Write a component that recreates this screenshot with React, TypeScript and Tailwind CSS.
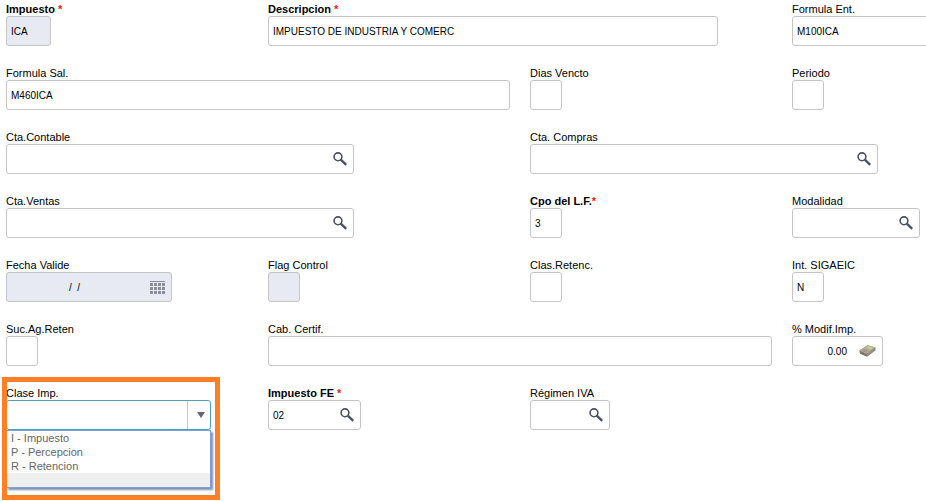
import React, { useState } from 'react';
import clsx from 'clsx';

const SearchIcon = () => (
  <svg width="14" height="14" viewBox="0 0 14 14" fill="none" stroke="#4b5162">
    <circle cx="5" cy="4.8" r="3.9" strokeWidth="1.6" />
    <path d="M7.8 7.6 L13.2 12.9" strokeWidth="2.3" />
  </svg>
);

const CalendarIcon = () => (
  <svg width="15" height="13" viewBox="0 0 15 13" fill="#8a8e98" shapeRendering="crispEdges">
    <rect x="0" y="0" width="15" height="1" />
    {[2, 6, 10].map((y) =>
      [0, 4, 8, 12].map((x) => <rect key={`${x}-${y}`} x={x} y={y} width="3" height="3" />)
    )}
  </svg>
);

const CalculatorIcon = () => (
  <svg width="17" height="14" viewBox="0 0 18 14">
    <path d="M0.5 6.6 L9.2 0.8 L17.4 3.4 L17.2 6.6 L8.4 13.2 L1 9.8 Z" fill="#7d746b" />
    <path d="M0.5 6.4 L9.2 0.8 L17.4 3.4 L8.2 10.2 Z" fill="#b5aca1" />
    <path d="M8.2 10.2 L17.4 3.4 L17.2 6.2 L8.4 12.8 Z" fill="#968d84" />
    <path d="M7.6 3.6 L10.6 1.6 L15.4 3.2 L12.2 5.5 Z" fill="#b6d67c" />
    <path d="M3.2 6.5 L8.4 8.4 M4.8 5.4 L10 7.2" stroke="#81776d" strokeWidth="0.8" strokeDasharray="1.6 0.8" />
  </svg>
);

type FieldProps = {
  id: string;
  label: string;
  required?: boolean;
  tight?: boolean;
  value?: string;
  width: string;
  span?: string;
  align?: string;
  disabled?: boolean;
  icon?: React.ReactNode;
  action?: string;
};

const Label = ({ id, label, required, tight }: Pick<FieldProps, 'id' | 'label' | 'required' | 'tight'>) => (
  <label htmlFor={id} className={clsx('block h-[14px] leading-[14px] whitespace-nowrap', required && 'font-bold')}>
    {label}
    {required && <span className="text-[#f02020]">{tight ? '*' : ' *'}</span>}
  </label>
);

const Field = ({ id, label, required, tight, value = '', width, span, align, disabled, icon, action }: FieldProps) => {
  const [text, setText] = useState(value);

  return (
    <div className={span}>
      <Label id={id} label={label} required={required} tight={tight} />
      <div
        className={clsx(
          'flex h-[30px] items-center rounded-[3px] border border-[#c4c5c7]',
          disabled ? 'bg-[#e7eaf2]' : 'bg-white',
          width
        )}
      >
        <input
          id={id}
          type="text"
          value={text}
          disabled={disabled}
          onChange={(e) => setText(e.target.value)}
          className={clsx('h-full w-full min-w-0 flex-1 bg-transparent px-1 text-[10px] outline-none', align)}
        />
        {icon && (
          <button type="button" aria-label={action} className="mr-[6px] ml-2 shrink-0">
            {icon}
          </button>
        )}
      </div>
    </div>
  );
};

const options = ['I - Impuesto', 'P - Percepcion', 'R - Retencion', ''];

const ClaseImp = () => {
  const [selected, setSelected] = useState('');

  return (
    <div className="relative">
      <Label id="clase" label="Clase Imp." />
      <div className="relative w-[205px]">
        <select
          id="clase"
          value={selected}
          onChange={(e) => setSelected(e.target.value)}
          className="block h-[30px] w-full appearance-none rounded-[3px] border border-[#4f9fb8] bg-white px-1 outline-none"
        >
          {options.map((option) => (
            <option key={option} value={option}>{option}</option>
          ))}
        </select>
        <span className="pointer-events-none absolute inset-y-px right-px flex w-[23px] items-center justify-center border-l border-[#c4c5c7] pl-1">
          <svg width="8" height="6" viewBox="0 0 8 6" fill="#626776">
            <path d="M0 0 H8 L4 6 Z" />
          </svg>
        </span>
        <ul
          role="listbox"
          aria-label="Clase Imp."
          className="absolute top-full right-0 left-0 border border-[#7b9fdb] bg-white text-[#666] shadow-[2px_2px_2px_#7d8fb0]"
        >
          {options.map((option) => (
            <li
              key={option}
              role="option"
              aria-selected={option === selected}
              onClick={() => setSelected(option)}
              className={clsx('h-[14px] px-1 leading-[14px]', option === selected && 'bg-[#efefef]')}
            >
              {option}
            </li>
          ))}
        </ul>
      </div>
      <div className="pointer-events-none absolute -top-[9px] -left-1 h-[123px] w-[218px] border-5 border-[#ff7f27]" />
    </div>
  );
};

const App = () => {
  return (
    <main className="min-h-screen overflow-hidden bg-white pt-[2px] pb-[71px] pl-[6px] font-['Liberation_Sans',Arial,sans-serif] text-[11px] text-black">
      <form className="grid grid-cols-[minmax(0,262fr)_minmax(0,262fr)_minmax(0,262fr)_minmax(0,134fr)] gap-y-5">
        <Field id="impuesto" label="Impuesto" required value="ICA" width="w-[45px]" disabled />
        <Field id="descripcion" label="Descripcion" required value="IMPUESTO DE INDUSTRIA Y COMERC" width="w-[450px]" span="col-span-2" />
        <Field id="formula-ent" label="Formula Ent." value="M100ICA" width="w-[504px]" />

        <Field id="formula-sal" label="Formula Sal." value="M460ICA" width="w-[504px]" span="col-span-2" />
        <Field id="dias" label="Dias Vencto" width="w-8" />
        <Field id="periodo" label="Periodo" width="w-8" />

        <Field id="contable" label="Cta.Contable" width="w-[348px]" span="col-span-2" icon={<SearchIcon />} action="Buscar cuenta contable" />
        <Field id="compras" label="Cta. Compras" width="w-[348px]" span="col-span-2" icon={<SearchIcon />} action="Buscar cuenta compras" />

        <Field id="ventas" label="Cta.Ventas" width="w-[348px]" span="col-span-2" icon={<SearchIcon />} action="Buscar cuenta ventas" />
        <Field id="cpo" label="Cpo del L.F." required tight value="3" width="w-8" />
        <Field id="modalidad" label="Modalidad" width="w-[128px]" icon={<SearchIcon />} action="Buscar modalidad" />

        <Field id="fecha" label="Fecha Valide" value="/  /" width="w-[166px]" align="text-center" disabled icon={<CalendarIcon />} action="Abrir calendario" />
        <Field id="flag" label="Flag Control" width="w-8" disabled />
        <Field id="retenc" label="Clas.Retenc." width="w-8" />
        <Field id="sigaeic" label="Int. SIGAEIC" value="N" width="w-8" />

        <Field id="suc" label="Suc.Ag.Reten" width="w-8" />
        <Field id="certif" label="Cab. Certif." width="w-[504px]" span="col-span-2" />
        <Field id="modif" label="% Modif.Imp." value="0.00" width="w-[91px]" align="text-right" icon={<CalculatorIcon />} action="Abrir calculadora" />

        <ClaseImp />
        <Field id="impuesto-fe" label="Impuesto FE" required value="02" width="w-[93px]" icon={<SearchIcon />} action="Buscar impuesto FE" />
        <Field id="regimen" label="Régimen IVA" width="w-[80px]" icon={<SearchIcon />} action="Buscar régimen IVA" />
      </form>
    </main>
  );
};

export default App;
